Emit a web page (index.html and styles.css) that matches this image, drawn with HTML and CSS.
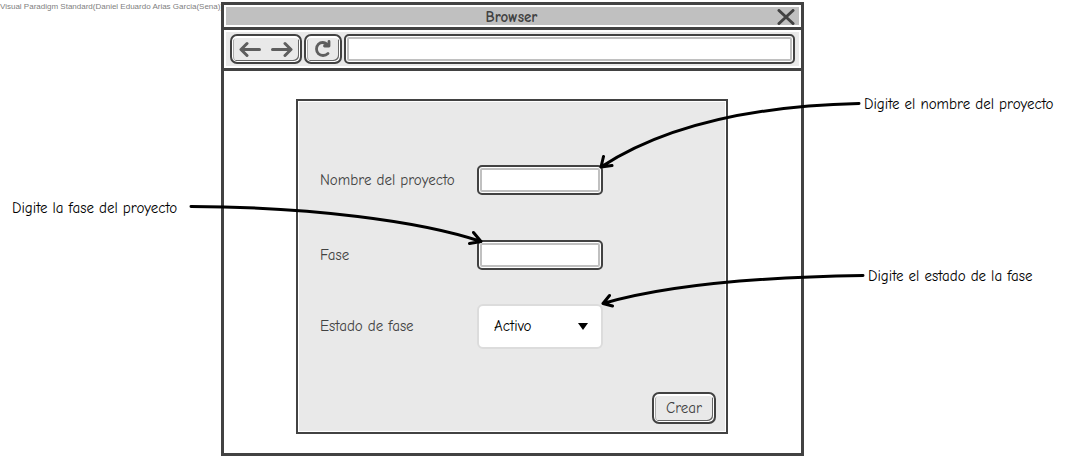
FILE: index.html
```html
<!DOCTYPE html>
<html lang="es">
<head>
<meta charset="utf-8">
<meta name="viewport" content="width=device-width, initial-scale=1">
<title>Crear fase</title>
<link rel="stylesheet" href="styles.css">
</head>
<body>
<main class="board">
  <aside class="side side-left">
    <p class="watermark">Visual Paradigm Standard(Daniel Eduardo Arias Garcia(Sena))</p>
    <p class="note">Digite la fase del proyecto</p>
  </aside>

  <section class="window">
    <header class="titlebar">
      <h1 class="title">Browser</h1>
      <button class="close" type="button" aria-label="Cerrar">
        <svg width="18" height="16" viewBox="0 0 18 16"><path d="M2 1.5 16 14.5M16 1.5 2 14.5"/></svg>
      </button>
    </header>
    <nav class="toolbar">
      <div class="sketch-button history">
        <button class="icon-button" type="button" aria-label="Atrás">
          <svg width="22" height="16" viewBox="0 0 22 16"><path d="M20.500 8.500H2.500M8 2.500 2 8.500 8 14.500"/></svg>
        </button>
        <button class="icon-button" type="button" aria-label="Adelante">
          <svg width="22" height="16" viewBox="0 0 22 16"><path d="M1.500 8.500H19.500M14 2.500 20 8.500 14 14.500"/></svg>
        </button>
      </div>
      <button class="sketch-button reload" type="button" aria-label="Recargar">
        <svg width="18" height="18" viewBox="0 0 18 18"><path d="M14 13.500C12.500 15 11 15.500 9 15.500 5.500 15.500 2.500 13 2.500 9S5.500 2.500 8.500 2.500C10.500 2.500 12 3 13.500 5M15 1.500V6H10.500" stroke-width="2.800"/></svg>
      </button>
      <input class="field address" type="text" aria-label="Dirección">
    </nav>
    <div class="content">
      <form class="panel">
        <div class="row">
          <label class="label" for="nombre">Nombre del proyecto</label>
          <input class="field" id="nombre" type="text">
        </div>
        <div class="row">
          <label class="label" for="fase">Fase</label>
          <input class="field" id="fase" type="text">
        </div>
        <div class="row">
          <label class="label" for="estado">Estado de fase</label>
          <div class="select-box">
            <select class="select" id="estado"><option>Activo</option></select>
            <svg class="caret" width="10" height="7" viewBox="0 0 10 7"><path d="M0 0H10L5 7Z"/></svg>
          </div>
        </div>
        <div class="actions">
          <button class="sketch-button create" type="button">Crear</button>
        </div>
      </form>
    </div>
  </section>

  <aside class="side side-right">
    <p class="note">Digite el nombre del proyecto</p>
    <p class="note">Digite el estado de la fase</p>
  </aside>

  <svg class="arrows" viewBox="0 0 1072 460" preserveAspectRatio="none" aria-hidden="true">
    <path d="M859 103.500C750 106 664 126 601 167M603.500 156.500 601 167 612 165.500"/>
    <path d="M191 206.500C310 207 420 221 481 241.500M473.500 232.500 481 241.500 469.500 243.500"/>
    <path d="M863 275.500C760 277 670 284 603 303.500M609.500 295.500 603 303.500 612.500 306"/>
  </svg>
</main>
</body>
</html>
```
FILE: styles.css
```css
* {
  box-sizing: border-box;
}

body {
  margin: 0;
  background: #fff;
  color: #000;
  font-family: "Comic Sans MS", "Comic Neue", "Open Sans", sans-serif;
  font-size: 15px;
  line-height: 20px;
}

button,
input,
select {
  font: inherit;
  color: inherit;
}

svg {
  display: block;
  fill: none;
  stroke: #5e5e5e;
  stroke-width: 3;
  stroke-linecap: round;
  stroke-linejoin: round;
}

.board {
  position: relative;
  display: grid;
  grid-template-columns: 221fr 583fr 268fr;
  min-height: 100vh;
  padding: 2px 0 4px;
}

.side {
  display: flex;
  flex-direction: column;
  min-width: 0;
}

.side-left {
  gap: 186px;
}

.side-right {
  gap: 152px;
  padding: 92px 0 0 60px;
}

.note {
  margin: 0;
  white-space: nowrap;
}

.side-left .note {
  padding-left: 12px;
}

.side-right .note + .note {
  padding-left: 4px;
}

.watermark {
  margin: 0;
  color: #808080;
  font-family: "Liberation Sans", Arial, sans-serif;
  font-size: 8px;
  line-height: 10px;
  white-space: nowrap;
}

.window {
  display: flex;
  flex-direction: column;
  min-width: 0;
  border: 3px solid #424242;
  color: #424242;
}

.titlebar,
.toolbar {
  border: 2px solid #fff;
  box-shadow: 0 3px #424242;
  margin-bottom: 3px;
}

.titlebar {
  display: grid;
  grid-template-columns: 20px 1fr 20px;
  align-items: center;
  height: 22px;
  padding-right: 2px;
  background: #c0c0c0;
}

.title {
  grid-column: 2;
  margin: 0;
  font-size: 15px;
  line-height: 20px;
  text-align: center;
}

.close,
.icon-button {
  padding: 0;
  border: 0;
  background: none;
}

.close svg {
  stroke: #424242;
}

.toolbar {
  display: flex;
  gap: 2px;
  height: 38px;
  padding: 2px 4px;
  background: #e9e9e9;
}

.sketch-button {
  display: flex;
  align-items: center;
  justify-content: center;
  height: 30px;
  padding: 0;
  border: 2px solid #424242;
  border-radius: 7px;
  background: #e9e9e9;
  box-shadow: inset 0 2px #fff, inset 1px 0 #fff, inset -1px -1px #fff, inset 2px 0 #aaa, inset -2px -2px #666;
}

.history {
  gap: 10px;
  width: 72px;
}

.reload {
  width: 38px;
}

.field {
  min-width: 0;
  height: 30px;
  padding: 0 8px;
  border: 2px solid #424242;
  border-radius: 5px;
  background: #fff;
  box-shadow: inset 0 0 0 1px #fff, inset 0 0 0 3px #c0c0c0;
}

.address {
  flex: 1;
}

.content {
  display: grid;
  flex: 1;
  padding: 28px 73px 19px 72px;
}

.panel {
  padding: 41px 10px 8px 22px;
  border: 2px solid #424242;
  background: #e9e9e9;
  box-shadow: inset 0 0 0 1px #fff;
}

.row {
  display: grid;
  grid-template-columns: 157fr 126fr 113fr;
  align-items: center;
  height: 75px;
}

.row:nth-child(3) {
  height: 68px;
}

.label {
  white-space: nowrap;
}

.select-box {
  position: relative;
}

.select {
  appearance: none;
  display: block;
  width: 100%;
  height: 45px;
  padding: 0 32px 0 15px;
  border: 2px solid #dcdcdc;
  border-radius: 6px;
  background: #fff;
  color: #000;
}

.caret {
  position: absolute;
  top: 19px;
  right: 15px;
  pointer-events: none;
}

.caret path {
  fill: #000;
  stroke: none;
}

.actions {
  display: flex;
  justify-content: flex-end;
  padding-top: 32px;
}

.create {
  width: 64px;
  height: 32px;
}

.arrows {
  position: absolute;
  inset: 0;
  width: 100%;
  height: 100%;
  pointer-events: none;
  stroke: #000;
}
```
